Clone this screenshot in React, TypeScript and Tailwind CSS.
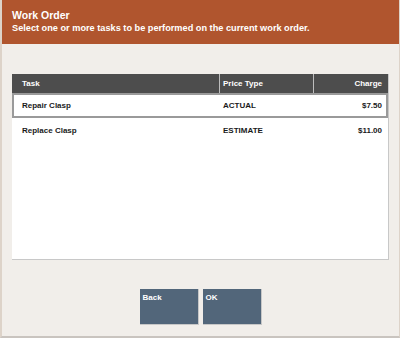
export default function App() {
  const rows = [
    { task: "Repair Clasp", type: "ACTUAL", charge: "$7.50", selected: true },
    { task: "Replace Clasp", type: "ESTIMATE", charge: "$11.00", selected: false },
  ];

  return (
    <div
      className="w-[400px] h-[338px] bg-[#f1eeea] flex flex-col overflow-hidden border-l-2 border-r border-b-2 border-l-[#ddd3c9] border-r-[#ddd3c9] border-b-[#c9c4bf]"
      style={{ fontFamily: '"Liberation Sans", Arial, sans-serif' }}
    >
      {/* Header */}
      <div className="h-[44px] bg-[#b0552e] text-white font-bold px-[10px] pt-[10px] leading-none shrink-0">
        <div className="text-[10.5px]">Work Order</div>
        <div className="text-[9.2px] mt-[3px]">
          Select one or more tasks to be performed on the current work order.
        </div>
      </div>

      {/* Table */}
      <div className="mt-[30px] ml-[10px] w-[377px] h-[186px] bg-white border-r border-b border-[#c8c8c8] flex flex-col">
        <div className="h-[19px] bg-[#4d4d4d] text-white text-[8px] font-bold flex items-center">
          <div className="w-[207px] pl-[10px]">Task</div>
          <div className="w-[94px] h-full border-l border-[#bdbdbd] flex items-center pl-[3px]">Price Type</div>
          <div className="flex-1 h-full border-l border-[#bdbdbd] flex items-center justify-end pr-[6px]">Charge</div>
        </div>
        {rows.map((r) => (
          <div
            key={r.task}
            className={`h-[25px] flex items-center text-[8px] font-bold text-[#1a1a1a] ${
              r.selected ? "border-2 border-[#9a9a9a]" : "border-2 border-transparent"
            }`}
          >
            <div className="w-[205px] pl-[8px]">{r.task}</div>
            <div className="w-[94px] pl-[4px]">{r.type}</div>
            <div className="flex-1 text-right pr-[4px]">{r.charge}</div>
          </div>
        ))}
      </div>

      {/* Buttons */}
      <div className="mt-[29px] flex justify-center gap-[4px]">
        <button className="w-[59px] h-[36px] bg-[#52667a] text-white text-[8px] font-bold text-left px-[3px] pt-[3px] flex items-start border-r border-b border-[#c7c7c7]">
          Back
        </button>
        <button className="w-[59px] h-[36px] bg-[#52667a] text-white text-[8px] font-bold text-left px-[3px] pt-[3px] flex items-start border-r border-b border-[#c7c7c7]">
          OK
        </button>
      </div>
    </div>
  );
}
